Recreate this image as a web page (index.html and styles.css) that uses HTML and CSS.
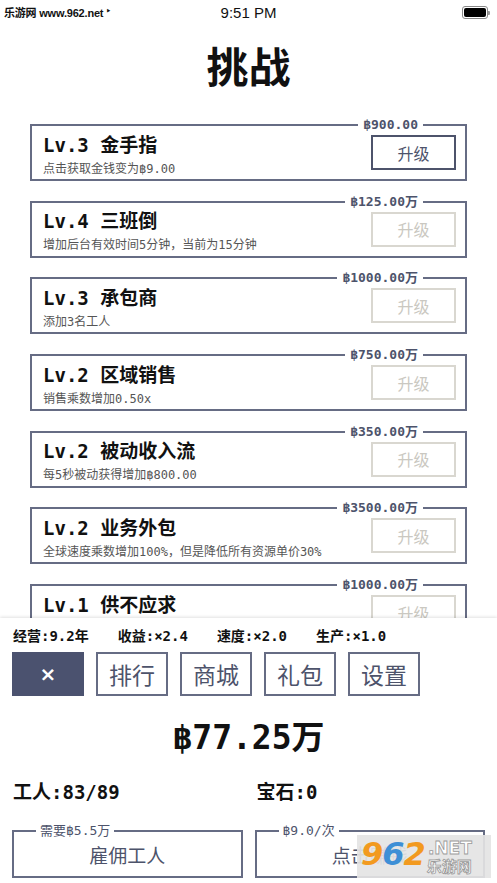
FILE: index.html
```html
<!DOCTYPE html>
<html lang="zh">
<head>
<meta charset="utf-8">
<title>挑战</title>
<link rel="stylesheet" href="styles.css">
</head>
<body>
<div class="app">
  <div class="statusbar">
    <span class="carrier">乐游网 www.962.net <span class="wifi">&#x2BC8;</span></span>
    <span class="clock">9:51 PM</span>
    <span class="battery"><span class="battery-fill"></span></span>
  </div>

  <h1 class="title">挑战</h1>

  <div class="list">
    <div class="card">
      <span class="price">฿900.00</span>
      <div class="info">
        <div class="name">Lv.3 金手指</div>
        <div class="desc">点击获取金钱变为฿9.00</div>
      </div>
      <button class="upgrade">升级</button>
    </div>
    <div class="card">
      <span class="price">฿125.00万</span>
      <div class="info">
        <div class="name">Lv.4 三班倒</div>
        <div class="desc">增加后台有效时间5分钟，当前为15分钟</div>
      </div>
      <button class="upgrade disabled">升级</button>
    </div>
    <div class="card">
      <span class="price">฿1000.00万</span>
      <div class="info">
        <div class="name">Lv.3 承包商</div>
        <div class="desc">添加3名工人</div>
      </div>
      <button class="upgrade disabled">升级</button>
    </div>
    <div class="card">
      <span class="price">฿750.00万</span>
      <div class="info">
        <div class="name">Lv.2 区域销售</div>
        <div class="desc">销售乘数增加0.50x</div>
      </div>
      <button class="upgrade disabled">升级</button>
    </div>
    <div class="card">
      <span class="price">฿350.00万</span>
      <div class="info">
        <div class="name">Lv.2 被动收入流</div>
        <div class="desc">每5秒被动获得增加฿800.00</div>
      </div>
      <button class="upgrade disabled">升级</button>
    </div>
    <div class="card">
      <span class="price">฿3500.00万</span>
      <div class="info">
        <div class="name">Lv.2 业务外包</div>
        <div class="desc">全球速度乘数增加100%，但是降低所有资源单价30%</div>
      </div>
      <button class="upgrade disabled">升级</button>
    </div>
    <div class="card">
      <span class="price">฿1000.00万</span>
      <div class="info">
        <div class="name">Lv.1 供不应求</div>
        <div class="desc">资源单价增加</div>
      </div>
      <button class="upgrade disabled">升级</button>
    </div>
  </div>

  <div class="panel">
    <div class="stats">
      <span>经营:9.2年</span>
      <span>收益:×2.4</span>
      <span>速度:×2.0</span>
      <span>生产:×1.0</span>
    </div>
    <div class="tabs">
      <button class="tab tab-close">×</button>
      <button class="tab">排行</button>
      <button class="tab">商城</button>
      <button class="tab">礼包</button>
      <button class="tab">设置</button>
    </div>
    <div class="money">฿77.25万</div>
    <div class="counts">
      <div class="count">工人:83/89</div>
      <div class="count">宝石:0</div>
    </div>
    <div class="actions">
      <button class="action">
        <span class="action-label">需要฿5.5万</span>
        雇佣工人
      </button>
      <button class="action">
        <span class="action-label">฿9.0/次</span>
        点击赚钱
      </button>
    </div>
    <div class="watermark">
      <span class="wm-num"><span class="wm-o">9</span><span class="wm-b">6</span><span class="wm-o">2</span></span>
      <span class="wm-right">
        <span class="wm-net">.NET</span>
        <span class="wm-cn">乐游网</span>
      </span>
    </div>
  </div>
</div>
</body>
</html>
```

FILE: styles.css
```css
html, body {
  margin: 0;
  padding: 0;
  background: #ffffff;
}

.app {
  width: 497px;
  height: 883px;
  display: flex;
  flex-direction: column;
  overflow: hidden;
  font-family: "DejaVu Sans Mono", "Noto Sans CJK SC", monospace;
  color: #111111;
  position: relative;
}

/* status bar */
.statusbar {
  height: 24px;
  flex: none;
  display: flex;
  align-items: center;
  justify-content: space-between;
  padding: 0 8px 0 4px;
  font-family: "Liberation Sans", "Noto Sans CJK SC", sans-serif;
  position: relative;
}

.carrier {
  font-size: 11px;
  font-weight: bold;
  color: #111;
  letter-spacing: -0.2px;
}

.wifi {
  font-size: 6px;
  vertical-align: 4px;
}

.clock {
  position: absolute;
  left: 0;
  right: 0;
  text-align: center;
  font-size: 15px;
  color: #111;
}

.battery {
  width: 22px;
  height: 9px;
  border: 1px solid #888;
  border-radius: 3px;
  padding: 1px;
  position: relative;
  margin-right: 1px;
}

.battery::after {
  content: "";
  position: absolute;
  right: -3px;
  top: 4px;
  width: 2px;
  height: 4px;
  background: #999;
  border-radius: 0 1px 1px 0;
}

.battery-fill {
  display: block;
  width: 100%;
  height: 100%;
  background: #000;
  border-radius: 2px;
}

/* title */
.title {
  flex: none;
  margin: 16px 0 0;
  text-align: center;
  font-family: "Noto Sans CJK SC", sans-serif;
  font-size: 42px;
  font-weight: bold;
  line-height: 50px;
  color: #111;
}

/* list */
.list {
  flex: 1;
  overflow: hidden;
  padding: 34px 30px 0;
  display: flex;
  flex-direction: column;
  gap: 19.7px;
}

.card {
  flex: none;
  position: relative;
  height: 57px;
  box-sizing: border-box;
  border: 2px solid #666c84;
  display: flex;
  align-items: center;
  justify-content: space-between;
  padding: 0 9px 0 11px;
}

.price {
  position: absolute;
  top: -9px;
  right: 42px;
  background: #fff;
  padding: 0 5px;
  font-size: 13px;
  line-height: 16px;
  font-weight: bold;
  color: #4d536b;
}

.info {
  display: flex;
  flex-direction: column;
  padding-top: 4px;
}

.name {
  font-size: 19px;
  font-weight: bold;
  line-height: 24px;
  color: #111;
  white-space: pre;
}

.desc {
  margin-top: 4px;
  font-size: 12px;
  line-height: 16px;
  color: #555;
  white-space: nowrap;
}

.upgrade {
  width: 85px;
  height: 35px;
  box-sizing: border-box;
  border: 2px solid #4d536b;
  background: #fff;
  color: #4d536b;
  font-family: "Noto Sans CJK SC", sans-serif;
  font-size: 16px;
  padding: 0;
}

.upgrade.disabled {
  border-color: #d9d7d0;
  color: #cac8c1;
}

/* bottom panel */
.panel {
  flex: none;
  height: 265px;
  box-sizing: border-box;
  background: #fff;
  box-shadow: 0 -1px 3px rgba(0, 0, 0, 0.12);
  padding: 9px 12px 0;
  position: relative;
}

.stats {
  display: flex;
  gap: 29px;
  font-size: 14px;
  font-weight: bold;
  line-height: 18px;
  padding-left: 1px;
  color: #111;
}

.tabs {
  display: flex;
  gap: 12px;
  margin-top: 7px;
}

.tab {
  width: 72px;
  height: 44px;
  box-sizing: border-box;
  border: 2px solid #666c84;
  background: #fff;
  color: #4d536b;
  font-family: "Noto Sans CJK SC", sans-serif;
  font-size: 23px;
  padding: 0;
}

.tab-close {
  background: #4b526f;
  border-color: #4b526f;
  color: #fff;
  font-family: "DejaVu Sans", sans-serif;
  font-size: 20px;
  font-weight: bold;
}

.money {
  margin-top: 22px;
  text-align: center;
  font-size: 33px;
  font-weight: bold;
  line-height: 40px;
  color: #111;
}

.counts {
  margin-top: 22px;
  display: grid;
  grid-template-columns: 1fr 1fr;
  gap: 12px;
}

.count {
  font-size: 19px;
  font-weight: bold;
  line-height: 24px;
  padding-left: 1px;
}

.count + .count {
  padding-left: 2px;
}

.actions {
  margin-top: 26px;
  display: grid;
  grid-template-columns: 1fr 1fr;
  gap: 12px;
}

.action {
  position: relative;
  height: 48px;
  box-sizing: border-box;
  border: 2px solid #666c84;
  background: #fff;
  color: #4d536b;
  font-family: "Noto Sans CJK SC", sans-serif;
  font-size: 19px;
  padding: 0;
}

.action-label {
  position: absolute;
  top: -9px;
  left: 22px;
  background: #fff;
  padding: 0 4px;
  font-family: "DejaVu Sans Mono", "Noto Sans CJK SC", monospace;
  font-size: 13px;
  line-height: 16px;
  color: #4d536b;
}

/* watermark overlay */
.watermark {
  position: absolute;
  left: 357px;
  top: 217px;
  width: 134px;
  height: 43px;
  background: rgba(228, 228, 228, 0.92);
  display: flex;
  align-items: center;
  padding-left: 4px;
  box-sizing: border-box;
}

.wm-num {
  font-family: "DejaVu Sans", sans-serif;
  font-size: 32px;
  font-weight: bold;
  font-style: italic;
  line-height: 32px;
  letter-spacing: -1px;
  margin-top: -6px;
}

.wm-o { color: #f29a1f; }
.wm-b { color: #3d8fd6; }

.wm-right {
  display: flex;
  flex-direction: column;
  align-items: flex-end;
  margin-left: 2px;
}

.wm-net {
  font-family: "DejaVu Sans", sans-serif;
  font-size: 17px;
  font-weight: bold;
  line-height: 18px;
  color: #fff;
  -webkit-text-stroke: 0.8px #9a9a9a;
}

.wm-cn {
  font-family: "Noto Sans CJK SC", sans-serif;
  font-size: 15px;
  font-weight: bold;
  line-height: 18px;
  color: #fff;
  -webkit-text-stroke: 0.8px #9a9a9a;
}
```
